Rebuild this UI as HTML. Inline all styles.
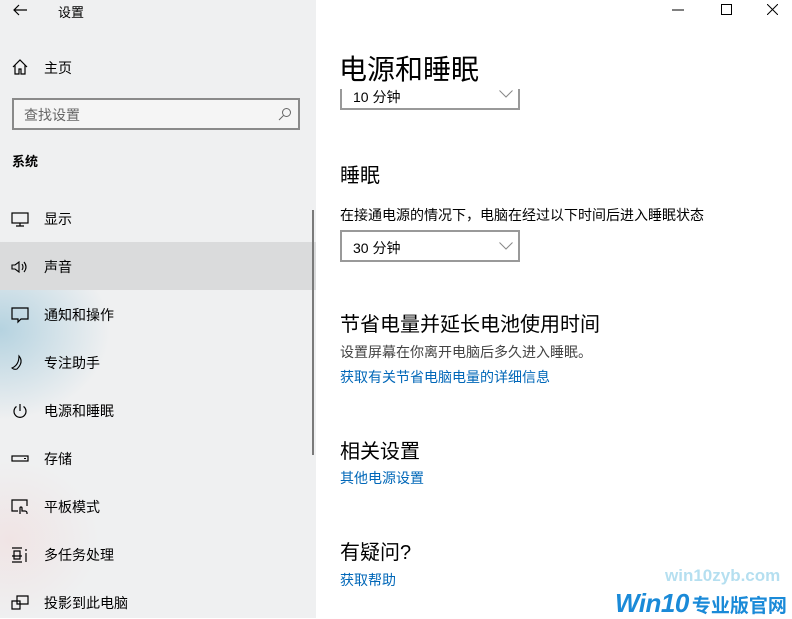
<!DOCTYPE html>
<html><head><meta charset="utf-8"><style>
*{margin:0;padding:0;box-sizing:border-box}
body{width:792px;height:618px;overflow:hidden;position:relative;background:#fff;font-family:"Liberation Sans","Noto Sans CJK SC",sans-serif;color:#000}
.side{position:absolute;left:0;top:0;width:316px;height:618px;background:
radial-gradient(ellipse 110px 90px at 0px 330px,rgba(150,195,215,.65),rgba(150,195,215,0)),
radial-gradient(ellipse 90px 80px at 10px 540px,rgba(240,220,220,.6),rgba(240,220,220,0)),
#eff0f1}
.t{position:absolute;font-size:14px;white-space:nowrap}
.ico{position:absolute;left:11px;width:18px;height:18px}
.sel{position:absolute;left:0;top:242px;width:316px;height:48px;background:#dadbdc}
.scroll{position:absolute;left:312px;top:210px;width:2px;height:245px;background:#7a7a7a}
.search{position:absolute;left:12px;top:98px;width:288px;height:32px;border:2px solid #8a8a8a;background:#f5f5f5}
.dd{position:absolute;left:340px;width:180px;height:32px;border:2px solid #999;background:#fff}
.link{color:#0067b8}
</style></head><body>
<div class="side">
<svg style="position:absolute;left:12px;top:3px" width="16" height="14" viewBox="0 0 16 14"><path d="M15 7H2M7 2L2 7l5 5" fill="none" stroke="#000" stroke-width="1.2"/></svg>
<div class="t" style="left:58px;top:2px;font-size:13px">设置</div>
<svg class="ico" style="top:58px" viewBox="0 0 18 18"><path d="M2 9L9 2l7 7M4 7v9h4v-5h2v5h4V7" fill="none" stroke="#000" stroke-width="1.2"/></svg>
<div class="t" style="left:44px;top:58px">主页</div>
<div class="search"><div class="t" style="left:10px;top:5px;color:#666">查找设置</div>
<svg style="position:absolute;right:6px;top:7px" width="14" height="14" viewBox="0 0 14 14"><circle cx="8.5" cy="5.5" r="4" fill="none" stroke="#666"/><path d="M5.5 8.5L1 13" stroke="#666"/></svg></div>
<div class="t" style="left:12px;top:151px;font-weight:bold;font-size:13px">系统</div>
<div class="sel"></div>
<div class="scroll"></div>
<svg class="ico" style="top:210px" viewBox="0 0 18 18"><rect x="1" y="3" width="16" height="10" fill="none" stroke="#000" stroke-width="1.2"/><path d="M9 13v3M5 16h8" stroke="#000" stroke-width="1.2"/></svg>
<div class="t" style="left:44px;top:209px">显示</div>
<svg class="ico" style="top:258px" viewBox="0 0 18 18"><path d="M1 7h3l4-3v10l-4-3H1z M11 6q2 3 0 6M13 4q4 5 0 10" fill="none" stroke="#000" stroke-width="1.1"/></svg>
<div class="t" style="left:44px;top:257px">声音</div>
<svg class="ico" style="top:306px" viewBox="0 0 18 18"><path d="M1 2h16v11H10l-3 3v-3H1z" fill="none" stroke="#000" stroke-width="1.2"/></svg>
<div class="t" style="left:44px;top:305px">通知和操作</div>
<svg class="ico" style="top:354px" viewBox="0 0 18 18"><path d="M8 2q5 6-2 13 q-3 1-5-1 q7-3 7-12z" fill="none" stroke="#000" stroke-width="1.1"/></svg>
<div class="t" style="left:44px;top:353px">专注助手</div>
<svg class="ico" style="top:402px" viewBox="0 0 18 18"><path d="M5.5 4.5a6 6 0 1 0 7 0M9 2v7" fill="none" stroke="#000" stroke-width="1.2"/></svg>
<div class="t" style="left:44px;top:401px">电源和睡眠</div>
<svg class="ico" style="top:450px" viewBox="0 0 18 18"><rect x="1" y="6" width="16" height="5" fill="none" stroke="#000" stroke-width="1.2"/><path d="M13 8.5h2" stroke="#000"/></svg>
<div class="t" style="left:44px;top:449px">存储</div>
<svg class="ico" style="top:498px" viewBox="0 0 18 18"><path d="M7 13H1V2h15v6M9 16v-6a1 1 0 0 1 2 0v3h3a2 2 0 0 1 2 2v1" fill="none" stroke="#000" stroke-width="1.2"/></svg>
<div class="t" style="left:44px;top:497px">平板模式</div>
<svg class="ico" style="top:546px" viewBox="0 0 18 18"><path d="M1 2h10M1 16h10M3 5v8h6V5z M1 10h10M15 3v2M15 7v9" fill="none" stroke="#000" stroke-width="1.2"/></svg>
<div class="t" style="left:44px;top:545px">多任务处理</div>
<svg class="ico" style="top:594px" viewBox="0 0 18 18"><path d="M6 2h11v8H6zM1 7h8v8H1zM3 15h4" fill="none" stroke="#000" stroke-width="1.2"/></svg>
<div class="t" style="left:44px;top:593px">投影到此电脑</div>
</div>

<svg style="position:absolute;left:672px;top:9px" width="12" height="2"><path d="M0 1h12" stroke="#000"/></svg>
<svg style="position:absolute;left:721px;top:4px" width="11" height="11"><rect x=".5" y=".5" width="10" height="10" fill="none" stroke="#000"/></svg>
<svg style="position:absolute;left:767px;top:4px" width="11" height="11"><path d="M0 0l11 11M11 0L0 11" stroke="#000"/></svg>

<div class="dd" style="top:78px;height:32px"><div class="t" style="left:11px;top:7px">10 分钟</div>
<svg style="position:absolute;left:157px;top:10px" width="14" height="8"><path d="M0.5 0.5l6.5 6.5 6.5-6.5" fill="none" stroke="#888"/></svg></div>
<div style="position:absolute;left:316px;top:40px;width:476px;height:49px;background:#fff"></div>
<div class="t" style="left:339px;top:48px;font-size:28px">电源和睡眠</div>

<div class="t" style="left:340px;top:159px;font-size:20px">睡眠</div>
<div class="t" style="left:340px;top:205px;font-size:14px">在接通电源的情况下，电脑在经过以下时间后进入睡眠状态</div>
<div class="dd" style="top:230px"><div class="t" style="left:11px;top:6px">30 分钟</div>
<svg style="position:absolute;left:157px;top:10px" width="14" height="8"><path d="M0.5 0.5l6.5 6.5 6.5-6.5" fill="none" stroke="#888"/></svg></div>

<div class="t" style="left:340px;top:308px;font-size:20px">节省电量并延长电池使用时间</div>
<div class="t" style="left:340px;top:342px;font-size:14px;color:#444">设置屏幕在你离开电脑后多久进入睡眠。</div>
<div class="t link" style="left:340px;top:367px;font-size:14px">获取有关节省电脑电量的详细信息</div>

<div class="t" style="left:340px;top:435px;font-size:20px">相关设置</div>
<div class="t link" style="left:340px;top:468px;font-size:14px">其他电源设置</div>

<div class="t" style="left:340px;top:536px;font-size:20px">有疑问?</div>
<div class="t link" style="left:340px;top:570px;font-size:14px">获取帮助</div>

<div class="t" style="left:665px;top:566px;font-size:17px;font-weight:bold;color:#b5dff0">win10zyb.com</div>
<div class="t" style="left:615px;top:588px;font-size:26px;font-weight:bold;font-style:italic;color:#1a8ad8;letter-spacing:-0.5px">Win10<span style="font-style:normal;font-size:19px;margin-left:3px;letter-spacing:0">专业版官网</span></div>
</body></html>
